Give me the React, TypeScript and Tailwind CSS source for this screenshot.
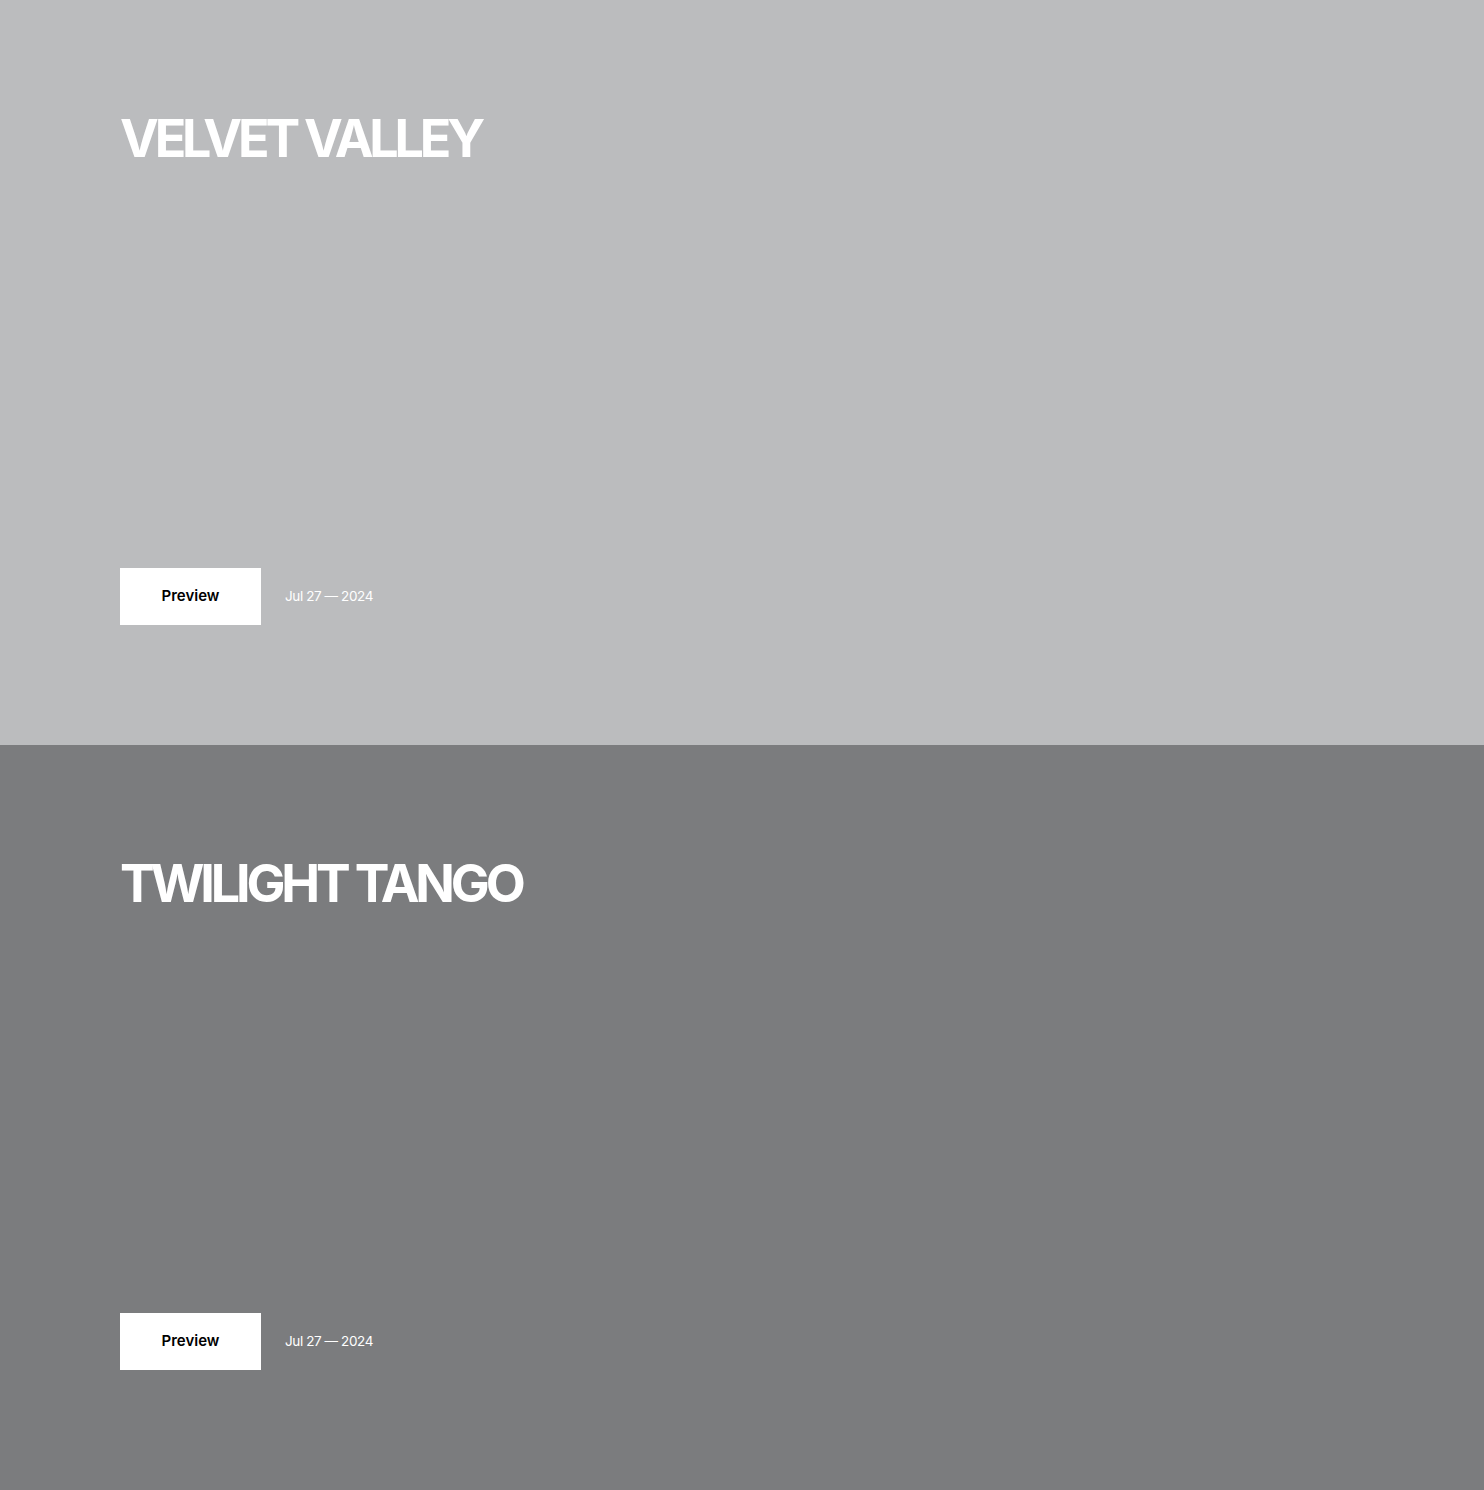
const projects = [
  { title: "VELVET VALLEY", date: "Jul 27 — 2024", bg: "bg-[#bbbcbe]" },
  { title: "TWILIGHT TANGO", date: "Jul 27 — 2024", bg: "bg-[#7b7c7e]" },
];

function ProjectPanel({
  title,
  date,
  bg,
}: {
  title: string;
  date: string;
  bg: string;
}) {
  return (
    <section
      className={`${bg} flex h-[745px] flex-col justify-between px-[120px] pb-[120px] pt-[113px]`}
    >
      <h2 className="text-[52px] font-bold leading-none tracking-[-0.08em] text-white">
        {title}
      </h2>
      <div className="flex items-center gap-6">
        <button className="h-[57px] w-[141px] bg-white text-[15px] font-semibold text-black">
          Preview
        </button>
        <span className="text-[13.5px] tracking-[-0.03em] text-white">
          {date}
        </span>
      </div>
    </section>
  );
}

export default function App() {
  return (
    <main className="font-['Inter',sans-serif]">
      {projects.map((p) => (
        <ProjectPanel key={p.title} title={p.title} date={p.date} bg={p.bg} />
      ))}
    </main>
  );
}
